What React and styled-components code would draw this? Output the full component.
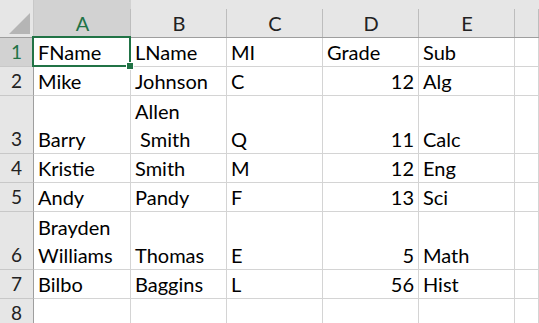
import React from "react";
import styled, { createGlobalStyle } from "styled-components";

const GlobalStyle = createGlobalStyle`
  html, body {
    margin: 0;
    padding: 0;
    background: #fff;
    overflow: hidden;
  }
`;

const columns = ["A", "B", "C", "D", "E", ""];

const rows = [
  { n: 1, tall: false, cells: ["FName", "LName", "MI", "Grade", "Sub"] },
  { n: 2, tall: false, cells: ["Mike", "Johnson", "C", 12, "Alg"] },
  { n: 3, tall: true, cells: ["Barry", ["Allen", "\u00a0Smith"], "Q", 11, "Calc"] },
  { n: 4, tall: false, cells: ["Kristie", "Smith", "M", 12, "Eng"] },
  { n: 5, tall: false, cells: ["Andy", "Pandy", "F", 13, "Sci"] },
  { n: 6, tall: true, cells: [["Brayden", "Williams"], "Thomas", "E", 5, "Math"] },
  { n: 7, tall: false, cells: ["Bilbo", "Baggins", "L", 56, "Hist"] },
  { n: 8, tall: false, cells: ["", "", "", "", ""] },
];

const Sheet = styled.div`
  display: grid;
  grid-template-columns: 34px 97px 96px 96px 96px 96px 1fr;
  grid-template-rows: 38px;
  grid-auto-rows: 29px;
  width: 539px;
  height: 323px;
  overflow: hidden;
  font-family: Lato, "Open Sans", sans-serif;
  color: #000;
`;

const Corner = styled.div`
  position: relative;
  background: #e6e6e6;
  border-right: 1px solid #c8c8c8;
  border-bottom: 1px solid #9e9e9e;
  box-sizing: border-box;

  &::after {
    content: "";
    position: absolute;
    right: 3px;
    bottom: 3px;
    width: 0;
    height: 0;
    border-left: 21px solid transparent;
    border-bottom: 21px solid #b5b5b5;
  }
`;

const ColHead = styled.div`
  position: relative;
  box-sizing: border-box;
  padding-top: 9px;
  background: ${(p) => (p.$active ? "#d2d2d2" : "#e6e6e6")};
  border-bottom: 1px solid #9e9e9e;
  display: flex;
  align-items: center;
  justify-content: center;
  font-size: 20px;
  color: ${(p) => (p.$active ? "#217346" : "#222")};

  &::after {
    content: "";
    position: absolute;
    right: 0;
    top: 9px;
    bottom: 0;
    width: 1px;
    background: #bdbdbd;
  }
`;

const RowHead = styled.div`
  box-sizing: border-box;
  grid-row: span ${(p) => (p.$tall ? 2 : 1)};
  background: ${(p) => (p.$active ? "#d2d2d2" : "#e6e6e6")};
  color: ${(p) => (p.$active ? "#217346" : "#222")};
  border-right: 1px solid #9e9e9e;
  border-bottom: 1px solid #c8c8c8;
  display: flex;
  align-items: flex-end;
  justify-content: center;
  font-size: 19px;
  line-height: 28px;
`;

const Cell = styled.div`
  position: relative;
  z-index: ${(p) => (p.$selected ? 2 : "auto")};
  box-sizing: border-box;
  grid-row: span ${(p) => (p.$tall ? 2 : 1)};
  border-right: 1px solid #d4d4d4;
  border-bottom: 1px solid #d4d4d4;
  padding: 0 4px 0 4px;
  display: flex;
  flex-direction: column;
  justify-content: flex-end;
  align-items: ${(p) => (p.$num ? "flex-end" : "flex-start")};
  font-size: 20px;
  line-height: 28px;
  white-space: pre;
`;

const Selection = styled.div`
  position: absolute;
  left: -2px;
  top: -2px;
  right: -1px;
  bottom: -1px;
  border: 2px solid #217346;
  pointer-events: none;

  &::after {
    content: "";
    position: absolute;
    right: -5px;
    bottom: -5px;
    width: 6px;
    height: 6px;
    background: #217346;
    border: 1px solid #fff;
  }
`;

export default function App() {
  return (
    <>
      <GlobalStyle />
      <Sheet>
        <Corner />
        {columns.map((c, i) => (
          <ColHead key={i} $active={c === "A"}>
            {c}
          </ColHead>
        ))}
        {rows.map((r) => (
          <React.Fragment key={r.n}>
            <RowHead $tall={r.tall} $active={r.n === 1}>
              {r.n}
            </RowHead>
            {r.cells.map((v, i) => {
              const selected = r.n === 1 && i === 0;
              return (
                <Cell key={i} $tall={r.tall} $num={typeof v === "number"} $selected={selected}>
                  {Array.isArray(v) ? v.map((line) => <span key={line}>{line}</span>) : <span>{v}</span>}
                  {selected && <Selection />}
                </Cell>
              );
            })}
            <Cell $tall={r.tall} />
          </React.Fragment>
        ))}
      </Sheet>
    </>
  );
}
